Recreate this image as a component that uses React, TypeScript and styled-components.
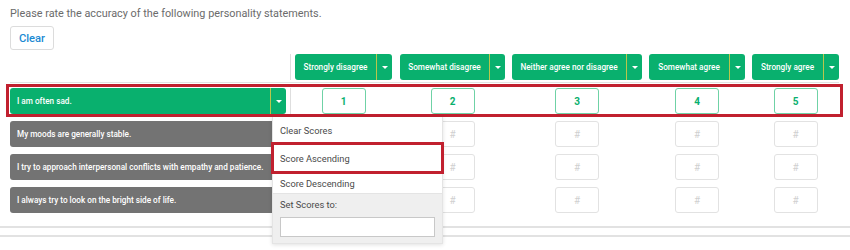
import React from "react";
import styled, { createGlobalStyle } from "styled-components";

const Global = createGlobalStyle`
  html, body { margin: 0; padding: 0; background: #fff; }
  body { font-family: "Roboto", "Liberation Sans", sans-serif; width: 850px; height: 250px; overflow: hidden; }
  * { box-sizing: border-box; }
`;

const GREEN = "#09b06e";
const COLS = "281px 101px 113px 137px 103px 94px";

const Page = styled.div`
  position: relative;
  width: 850px;
  height: 250px;
`;

const Content = styled.div`
  padding: 6px 0 0 10px;
`;

const Title = styled.div`
  font-size: 10.85px;
  line-height: 16px;
  color: #6b6b6b;
  height: 16px;
`;

const ClearButton = styled.button`
  margin-top: 4px;
  width: 44px;
  height: 24px;
  border: 1px solid #dcdcdc;
  border-radius: 3px;
  background: #fff;
  color: #1b8ad3;
  font-family: inherit;
  font-size: 11.2px;
  font-weight: 500;
  padding: 0;
  display: block;
`;

const Matrix = styled.div`
  margin-top: 4px;
  width: 829px;
`;

const HeaderRow = styled.div`
  display: grid;
  grid-template-columns: ${COLS};
  border-bottom: 1px solid #e2e2e2;
  padding-bottom: 2px;
`;

const Spacer = styled.div`
  border-right: 1px solid #dedede;
`;

const HeaderCell = styled.div<{ $lead: number }>`
  padding-left: ${(p) => p.$lead}px;
  display: flex;
`;

const SplitButton = styled.div`
  flex: 1;
  height: 26px;
  display: flex;
  border-radius: 3px;
  background: ${GREEN};
  color: #fff;
  overflow: hidden;
`;

const ButtonLabel = styled.div<{ $size: number; $center?: boolean }>`
  flex: 1;
  display: flex;
  align-items: center;
  justify-content: ${(p) => (p.$center ? "center" : "flex-start")};
  padding-left: ${(p) => (p.$center ? 0 : 7)}px;
  font-size: ${(p) => p.$size}px;
  font-weight: 500;
  white-space: nowrap;
`;

const Caret = styled.div`
  width: 16px;
  flex: none;
  border-left: 1px solid #b9c64c;
  display: flex;
  align-items: center;
  justify-content: center;
  &::after {
    content: "";
    border-left: 3px solid transparent;
    border-right: 3px solid transparent;
    border-top: 3px solid #fff;
  }
`;

const Row = styled.div<{ $highlight?: boolean }>`
  display: grid;
  grid-template-columns: ${COLS};
  margin-top: 7px;
  ${(p) =>
    p.$highlight &&
    `
    margin: 4px -1px 0 -1px;
    padding: 1px 1px 0 1px;
    outline: 3px solid #c1202f;
  `}
`;

const LabelCell = styled.div<{ $divider?: boolean }>`
  display: flex;
  padding-right: 4px;
  ${(p) => p.$divider && `border-right: 1px solid #dedede;`}
`;

const GrayLabel = styled.div`
  flex: 1;
  height: 26px;
  border-radius: 3px;
  background: #737373;
  color: #fff;
  font-size: 8.2px;
  font-weight: 500;
  display: flex;
  align-items: center;
  padding-left: 7px;
  white-space: nowrap;
  overflow: hidden;
`;

const BoxCell = styled.div<{ $lead: number }>`
  padding-left: ${(p) => p.$lead}px;
  display: flex;
  justify-content: center;
`;

const ScoreBox = styled.div<{ $filled: boolean }>`
  width: 44px;
  height: 26px;
  border-radius: 3px;
  border: 1.5px solid ${(p) => (p.$filled ? "#6fd2a6" : "#e2e2e2")};
  display: flex;
  align-items: center;
  justify-content: center;
  font-size: 10px;
  font-weight: ${(p) => (p.$filled ? 700 : 400)};
  color: ${(p) => (p.$filled ? GREEN : "#d0d0d0")};
  background: #fff;
`;

const Footer = styled.div`
  margin-top: 13px;
  height: 11px;
  border-top: 2px solid #e2e2e2;
  border-bottom: 2px solid #e2e2e2;
`;

const Menu = styled.div`
  position: absolute;
  left: 272px;
  top: 117px;
  width: 171px;
  background: #fff;
  border: 1px solid #e4e4e4;
  border-top: none;
  box-shadow: 0 1px 4px rgba(0, 0, 0, 0.12);
`;

const MenuItem = styled.div<{ $h: number; $highlight?: boolean }>`
  height: ${(p) => p.$h}px;
  display: flex;
  align-items: center;
  padding-left: 7px;
  font-size: 9.3px;
  color: #4a4a4a;
  ${(p) =>
    p.$highlight &&
    `outline: 3px solid #c1202f; outline-offset: -2px; position: relative; margin: 0 -1px; padding-left: 8px;`}
`;

const SetSection = styled.div`
  background: #efefef;
  border-top: 1px solid #e4e4e4;
  padding: 4px 7px 6px 7px;
`;

const SetLabel = styled.div`
  font-size: 9.3px;
  color: #4a4a4a;
  line-height: 14px;
`;

const SetInput = styled.div`
  margin-top: 5px;
  height: 20px;
  background: #fff;
  border: 1px solid #c8c8c8;
`;

const columns = [
  { label: "Strongly disagree", lead: 4 },
  { label: "Somewhat disagree", lead: 8 },
  { label: "Neither agree nor disagree", lead: 7 },
  { label: "Somewhat agree", lead: 7 },
  { label: "Strongly agree", lead: 7 },
];

const statements = [
  "My moods are generally stable.",
  "I try to approach interpersonal conflicts with empathy and patience.",
  "I always try to look on the bright side of life.",
];

export default function App() {
  return (
    <Page>
      <Global />
      <Content>
        <Title>Please rate the accuracy of the following personality statements.</Title>
        <ClearButton>Clear</ClearButton>
        <Matrix>
          <HeaderRow>
            <Spacer />
            {columns.map((c) => (
              <HeaderCell key={c.label} $lead={c.lead}>
                <SplitButton>
                  <ButtonLabel $size={8.2} $center>
                    {c.label}
                  </ButtonLabel>
                  <Caret />
                </SplitButton>
              </HeaderCell>
            ))}
          </HeaderRow>
          <Row $highlight>
            <LabelCell $divider>
              <SplitButton>
                <ButtonLabel $size={8.2}>I am often sad.</ButtonLabel>
                <Caret />
              </SplitButton>
            </LabelCell>
            {columns.map((c, i) => (
              <BoxCell key={c.label} $lead={c.lead}>
                <ScoreBox $filled>{i + 1}</ScoreBox>
              </BoxCell>
            ))}
          </Row>
          {statements.map((s) => (
            <Row key={s}>
              <LabelCell>
                <GrayLabel>{s}</GrayLabel>
              </LabelCell>
              {columns.map((c) => (
                <BoxCell key={c.label} $lead={c.lead}>
                  <ScoreBox $filled={false}>#</ScoreBox>
                </BoxCell>
              ))}
            </Row>
          ))}
        </Matrix>
      </Content>
      <Footer />
      <Menu>
        <MenuItem $h={26}>Clear Scores</MenuItem>
        <MenuItem $h={30} $highlight>
          Score Ascending
        </MenuItem>
        <MenuItem $h={20}>Score Descending</MenuItem>
        <SetSection>
          <SetLabel>Set Scores to:</SetLabel>
          <SetInput />
        </SetSection>
      </Menu>
    </Page>
  );
}
